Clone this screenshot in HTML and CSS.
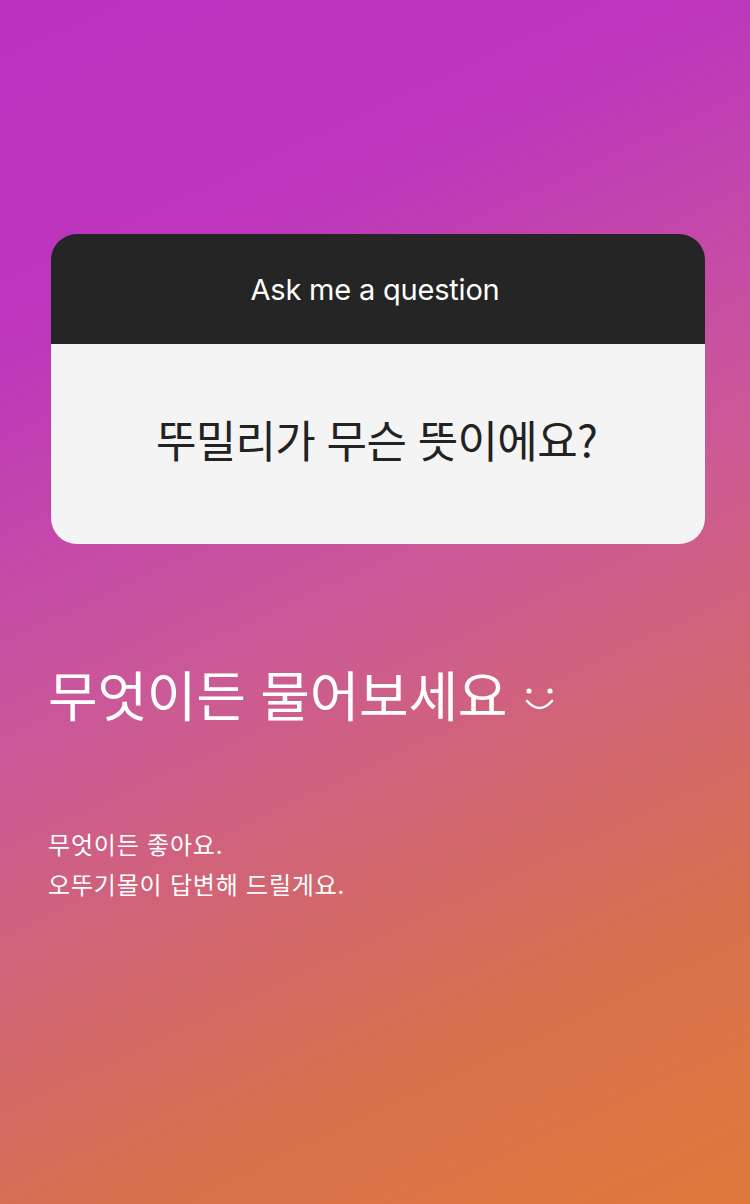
FILE: index.html
```html
<!DOCTYPE html>
<html lang="ko">
<head>
<meta charset="utf-8">
<link rel="stylesheet" href="styles.css">
</head>
<body>
<main class="story">
  <section class="card">
    <header class="card-head">Ask me a question</header>
    <div class="card-body">뚜밀리가 무슨 뜻이에요?</div>
  </section>
  <h1 class="title">무엇이든 물어보세요<svg class="smile" width="34" height="30" viewBox="0 0 34 30"><circle cx="6" cy="7" r="2.6" fill="#fff"/><circle cx="27" cy="7" r="2.6" fill="#fff"/><path d="M4 17 Q16.5 31 29 17" fill="none" stroke="#fff" stroke-width="2.6" stroke-linecap="round"/></svg></h1>
  <p class="desc">무엇이든 좋아요.<br>오뚜기몰이 답변해 드릴게요.</p>
</main>
</body>
</html>
```
FILE: styles.css
```css
html, body {
  margin: 0;
  padding: 0;
}
body {
  width: 750px;
  height: 1204px;
  font-family: "Noto Sans CJK KR", "Noto Sans", sans-serif;
}
.story {
  box-sizing: border-box;
  width: 750px;
  height: 1204px;
  padding: 234px 45px 0 48px;
  background: linear-gradient(155deg, #bc32c0 0%, #bd36bc 22%, #cb5a96 50%, #d8704f 80%, #e0793a 100%);
  display: flex;
  flex-direction: column;
}
.card {
  width: 654px;
  margin-left: 3px;
  border-radius: 26px;
  overflow: hidden;
}
.card-head {
  height: 110px;
  background: #252525;
  color: #fff;
  font-family: Inter, "Noto Sans", sans-serif;
  font-size: 29px;
  letter-spacing: -0.2px;
  display: flex;
  align-items: center;
  justify-content: center;
  padding-right: 6px;
  box-sizing: border-box;
}
.card-body {
  height: 200px;
  background: #f4f4f4;
  color: #222;
  font-size: 44px;
  letter-spacing: -0.7px;
  display: flex;
  align-items: center;
  justify-content: center;
  padding: 0 3px 10px 0;
  box-sizing: border-box;
}
.title {
  margin: 112px 0 0 0;
  color: #fff;
  font-weight: 400;
  font-size: 54px;
  line-height: 76px;
  letter-spacing: -0.3px;
  display: flex;
  align-items: center;
}
.smile {
  margin-left: 16px;
  margin-top: 10px;
}
.desc {
  margin: 92px 0 0 0;
  color: #fff;
  font-size: 24px;
  line-height: 40px;
  letter-spacing: 0.8px;
}
```
